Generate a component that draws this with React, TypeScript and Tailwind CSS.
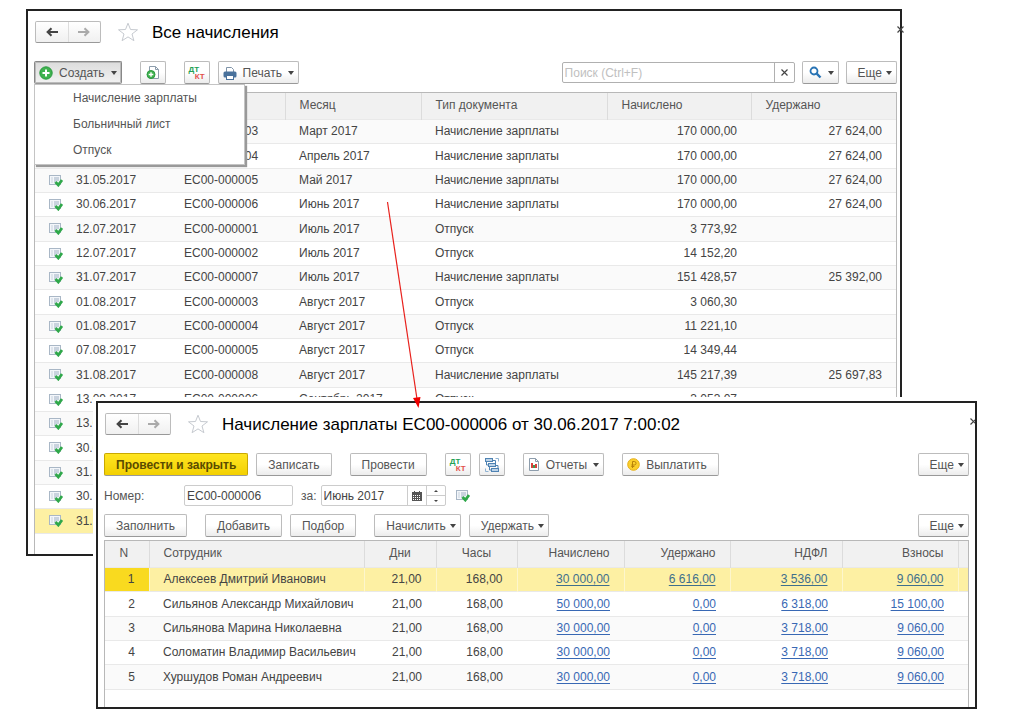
import { useState } from "react";
import type { ReactNode } from "react";
import clsx from "clsx";

interface Accrual {
  date: string;
  number?: string;
  month?: string;
  type?: string;
  accrued?: string;
  withheld?: string;
}

interface Employee {
  name: string;
  days: string;
  hours: string;
  sums: string[];
}

const SALARY = "Начисление зарплаты";
const VACATION = "Отпуск";

const accruals: Accrual[] = [
  { date: "31.03.2017", number: "ЕС00-000003", month: "Март 2017", type: SALARY, accrued: "170 000,00", withheld: "27 624,00" },
  { date: "30.04.2017", number: "ЕС00-000004", month: "Апрель 2017", type: SALARY, accrued: "170 000,00", withheld: "27 624,00" },
  { date: "31.05.2017", number: "ЕС00-000005", month: "Май 2017", type: SALARY, accrued: "170 000,00", withheld: "27 624,00" },
  { date: "30.06.2017", number: "ЕС00-000006", month: "Июнь 2017", type: SALARY, accrued: "170 000,00", withheld: "27 624,00" },
  { date: "12.07.2017", number: "ЕС00-000001", month: "Июль 2017", type: VACATION, accrued: "3 773,92" },
  { date: "12.07.2017", number: "ЕС00-000002", month: "Июль 2017", type: VACATION, accrued: "14 152,20" },
  { date: "31.07.2017", number: "ЕС00-000007", month: "Июль 2017", type: SALARY, accrued: "151 428,57", withheld: "25 392,00" },
  { date: "01.08.2017", number: "ЕС00-000003", month: "Август 2017", type: VACATION, accrued: "3 060,30" },
  { date: "01.08.2017", number: "ЕС00-000004", month: "Август 2017", type: VACATION, accrued: "11 221,10" },
  { date: "07.08.2017", number: "ЕС00-000005", month: "Август 2017", type: VACATION, accrued: "14 349,44" },
  { date: "31.08.2017", number: "ЕС00-000008", month: "Август 2017", type: SALARY, accrued: "145 217,39", withheld: "25 697,83" },
  { date: "13.09.2017", number: "ЕС00-000006", month: "Сентябрь 2017", type: VACATION, accrued: "3 053,07" },
  { date: "13.09.2017" },
  { date: "30.09.2017" },
  { date: "31.10.2017" },
  { date: "30.11.2017" },
  { date: "31.12.2017" },
];

const employees: Employee[] = [
  { name: "Алексеев Дмитрий Иванович", days: "21,00", hours: "168,00", sums: ["30 000,00", "6 616,00", "3 536,00", "9 060,00"] },
  { name: "Сильянов Александр Михайлович", days: "21,00", hours: "168,00", sums: ["50 000,00", "0,00", "6 318,00", "15 100,00"] },
  { name: "Сильянова Марина Николаевна", days: "21,00", hours: "168,00", sums: ["30 000,00", "0,00", "3 718,00", "9 060,00"] },
  { name: "Соломатин Владимир Васильевич", days: "21,00", hours: "168,00", sums: ["30 000,00", "0,00", "3 718,00", "9 060,00"] },
  { name: "Хуршудов Роман Андреевич", days: "21,00", hours: "168,00", sums: ["30 000,00", "0,00", "3 718,00", "9 060,00"] },
];

function PostedIcon() {
  return (
    <svg width="14" height="13" viewBox="0 0 14 13" className="shrink-0">
      <rect x="0.5" y="1.5" width="11" height="9" fill="#f3f6fa" stroke="#a9b7c6" />
      <path d="M2.5 4h1M5 4h5M2.5 6h1M5 6h5M2.5 8h1M5 8h2" stroke="#9fb0c3" />
      <path d="M6.5 8l2.8 3L13 6" fill="none" stroke="#2fa84a" strokeWidth="2.8" />
    </svg>
  );
}

function Caret() {
  return (
    <svg width="6" height="4" viewBox="0 0 6 4" className="mt-px shrink-0">
      <path d="M0 0h6L3 4z" fill="#444" />
    </svg>
  );
}

function PlusIcon() {
  return (
    <svg width="14" height="14" viewBox="0 0 14 14" className="shrink-0">
      <circle cx="7" cy="7" r="6.2" fill="#3fb24f" stroke="#2b9a40" />
      <path d="M7 3.5v7M3.5 7h7" stroke="#fff" strokeWidth="2" />
    </svg>
  );
}

function CopyIcon() {
  return (
    <svg width="14" height="15" viewBox="0 0 14 15" className="shrink-0">
      <path d="M3.5 1.5h6l3 3v9h-9z" fill="#fff" stroke="#8d9dac" />
      <path d="M9.5 1.5v3h3" fill="none" stroke="#8d9dac" />
      <circle cx="5" cy="9.5" r="4" fill="#3fb24f" stroke="#2b9a40" />
      <path d="M5 7.2v4.6M2.7 9.5h4.6" stroke="#fff" strokeWidth="1.4" />
    </svg>
  );
}

function PrinterIcon() {
  return (
    <svg width="14" height="14" viewBox="0 0 14 14" className="shrink-0">
      <path d="M3.5 6V1.5h5l2 2V6" fill="#fff" stroke="#7f93a8" />
      <rect x="0.5" y="5.5" width="13" height="6" rx="1.5" fill="#4a729c" />
      <rect x="3.5" y="9.5" width="7" height="4" fill="#fff" stroke="#4a729c" />
    </svg>
  );
}

function SearchIcon() {
  return (
    <svg width="13" height="13" viewBox="0 0 13 13" className="shrink-0">
      <circle cx="5" cy="5" r="3.5" fill="none" stroke="#2873b4" strokeWidth="1.8" />
      <path d="M7.7 7.7l3.8 3.8" stroke="#2873b4" strokeWidth="2.4" />
    </svg>
  );
}

function StructureIcon() {
  return (
    <svg width="14" height="14" viewBox="0 0 14 14" className="shrink-0" fill="none" stroke="#4f83b3">
      <path d="M10.5 0.5h3v3M3.5 13.5h-3v-3" stroke="#8fb2d2" />
      <rect x="0.5" y="0.5" width="7" height="3" fill="#bcd3e8" />
      <rect x="3.5" y="5.5" width="7" height="3" fill="#bcd3e8" />
      <rect x="6.5" y="10.5" width="7" height="3" fill="#bcd3e8" />
      <path d="M1.5 4v3h2M4.5 9v3h2M8 2.5h2.5v3M11 7.500h2v3" />
    </svg>
  );
}

function ReportIcon() {
  return (
    <svg width="12" height="13" viewBox="0 0 12 13" className="shrink-0">
      <path d="M1.5 0.5h6l3 3v9h-9z" fill="#fff" stroke="#8d9dac" />
      <path d="M7.500 0.500v3h3" fill="none" stroke="#8d9dac" />
      <path d="M3 5h2v5H3z" fill="#d8403a" />
      <path d="M5 7h2v3H5z" fill="#3f9a55" />
      <path d="M7 6h2v4H7z" fill="#d8403a" />
    </svg>
  );
}

function CoinIcon() {
  return (
    <svg width="13" height="13" viewBox="0 0 13 13" className="shrink-0">
      <circle cx="6.5" cy="6.5" r="5.8" fill="#fbcf2c" stroke="#e5ae15" />
      <path d="M5.500 10V3.500h1.800a1.700 1.700 0 010 3.500H4.300M4.300 8.500h3" fill="none" stroke="#b8830b" />
    </svg>
  );
}

function CalendarIcon() {
  return (
    <svg width="10" height="10" viewBox="0 0 10 10" className="shrink-0">
      <path d="M0 1h10v9H0z" fill="#555" />
      <path d="M2.500 0v2M7.500 0v2" stroke="#555" />
      <path d="M1 4.500h8M1 6.500h8M1 8.500h8" stroke="#fff" strokeDasharray="1 1" />
    </svg>
  );
}

function CrossIcon() {
  return (
    <svg width="7" height="7" viewBox="0 0 7 7" className="shrink-0">
      <path d="M0.500 0.500l6 6M6.500 0.500l-6 6" stroke="#444" strokeWidth="1.200" />
    </svg>
  );
}

function DebitCredit() {
  return (
    <span className="flex w-4 flex-col text-[8px] leading-[7px] font-bold">
      <span className="text-left text-[#23a055]">ДТ</span>
      <span className="text-right text-[#e2504c]">КТ</span>
    </span>
  );
}

interface ToolButtonProps {
  children?: ReactNode;
  icon?: ReactNode;
  menu?: boolean;
  label?: string;
  className?: string;
  onClick?: () => void;
}

function ToolButton({ children, icon, menu, label, className, onClick }: ToolButtonProps) {
  return (
    <button
      type="button"
      aria-label={label}
      onClick={onClick}
      className={clsx(
        "flex h-[23px] shrink-0 items-center justify-center rounded-[2px] border border-b-[#999] whitespace-nowrap",
        className ?? "border-[#bcbcbc] bg-linear-to-b from-white from-50% to-[#ececec] text-[#555]",
        icon ? "gap-1.5" : "gap-1",
        !children && !menu && "w-[26px]",
        children && !icon && "pl-[11px]",
        icon && children && "pl-1",
        icon && !children && menu && "pl-1.5",
        menu ? "pr-1" : children && "pr-[11px]"
      )}
    >
      {icon}
      {children}
      {menu && <Caret />}
    </button>
  );
}

function WindowHeader({ title }: { title: string }) {
  return (
    <div className="flex h-[22px] items-center">
      <div className="ml-px flex h-[22px] w-[66px] rounded-[2px] border border-[#bcbcbc] border-b-[#999] bg-linear-to-b from-white to-[#f0f0f0]">
        <button type="button" aria-label="Назад" className="flex flex-1 items-center justify-center border-r border-[#ddd]">
          <svg width="12" height="10" viewBox="0 0 12 10" fill="none" stroke="#444" strokeWidth="2">
            <path d="M12 5H2M5.500 1.200L1.600 5l3.900 3.800" />
          </svg>
        </button>
        <button type="button" aria-label="Вперед" className="flex flex-1 items-center justify-center">
          <svg width="12" height="10" viewBox="0 0 12 10" fill="none" stroke="#aaa" strokeWidth="2">
            <path d="M0 5h10M6.500 1.200L10.400 5l-3.900 3.800" />
          </svg>
        </button>
      </div>
      <svg width="22" height="20" viewBox="0 0 22 20" className="ml-4 shrink-0">
        <path
          d="M11 1.200l2.500 6.300 7 .3-5.500 4.200 1.900 6.700-5.900-3.800-5.900 3.800L7 12 1.500 7.800l7-.3z"
          fill="#fff"
          stroke="#c6cad0"
        />
      </svg>
      <h1 className="ml-[13px] pt-0.5 text-[17px] leading-[22px] whitespace-nowrap text-black">{title}</h1>
    </div>
  );
}

function AccrualsTable() {
  return (
    <table className="w-full table-fixed border-collapse">
      <colgroup>
        <col className="w-[27px]" />
        <col className="w-[108px]" />
        <col className="w-[115px]" />
        <col className="w-[136px]" />
        <col className="w-[186px]" />
        <col className="w-[144px]" />
        <col />
      </colgroup>
      <thead>
        <tr className="h-[26px] bg-[#f1f1f1] text-left text-[#555] *:pb-0.5 *:font-normal">
          <th />
          <th className="pl-3.5">Дата</th>
          <th className="border-r border-[#dcdcdc] pl-3.5">Номер</th>
          <th className="border-r border-[#dcdcdc] pl-3.5">Месяц</th>
          <th className="border-r border-[#dcdcdc] pl-3.5">Тип документа</th>
          <th className="border-r border-[#dcdcdc] pl-3.5">Начислено</th>
          <th className="pl-3.5">Удержано</th>
        </tr>
      </thead>
      <tbody>
        {accruals.map((row, index) => (
          <tr
            key={index}
            className={clsx(
              "h-6 border-y border-[#e9e9e9] nth-[3n+2]:h-[25px]",
              index === accruals.length - 1 ? "bg-[#fdf0a3]" : "odd:bg-[#fafafa]"
            )}
          >
            <td className="pl-3.5">
              <PostedIcon />
            </td>
            <td className="pl-3.5">{row.date}</td>
            <td className="pl-3.5">{row.number}</td>
            <td className="pl-3.5">{row.month}</td>
            <td className="pl-3.5">{row.type}</td>
            <td className="pr-3.5 text-right">{row.accrued}</td>
            <td className="pr-3.5 text-right">{row.withheld}</td>
          </tr>
        ))}
      </tbody>
    </table>
  );
}

function EmployeesTable() {
  return (
    <table className="w-full table-fixed border-collapse">
      <colgroup>
        <col className="w-11" />
        <col />
        <col className="w-[72px]" />
        <col className="w-[81px]" />
        <col className="w-[107px]" />
        <col className="w-[106px]" />
        <col className="w-28" />
        <col className="w-[116px]" />
        <col className="w-2.5" />
      </colgroup>
      <thead>
        <tr className="h-[26px] bg-[#f1f1f1] text-[#555] *:border-r *:border-[#dcdcdc] *:pb-0.5 *:font-normal *:last:border-r-0">
          <th className="pr-1.5">N</th>
          <th className="pl-3.5 text-left">Сотрудник</th>
          <th>Дни</th>
          <th>Часы</th>
          <th className="pr-3.5 text-right">Начислено</th>
          <th className="pr-3.5 text-right">Удержано</th>
          <th className="pr-3.5 text-right">НДФЛ</th>
          <th className="pr-3.5 text-right">Взносы</th>
          <th />
        </tr>
      </thead>
      <tbody>
        {employees.map((employee, index) => (
          <tr
            key={employee.name}
            className={clsx(
              "h-6 border-y border-[#e9e9e9] nth-[3n+2]:h-[25px]",
              index === 0 ? "bg-[#fdf0a3] *:border-r *:border-[#fdf6cc] *:last:border-r-0" : "odd:bg-[#fafafa]"
            )}
          >
            <td className={clsx("pr-3.5 text-right", index === 0 && "bg-[#f9da1f]")}>{index + 1}</td>
            <td className="pl-3.5 whitespace-nowrap">{employee.name}</td>
            <td className="pr-3.5 text-right">{employee.days}</td>
            <td className="pr-3.5 text-right">{employee.hours}</td>
            {employee.sums.map((sum, i) => (
              <td key={i} className="pr-3.5 text-right">
                <a href="#" className={clsx("underline underline-offset-2", index === 0 ? "text-[#3f6f8c]" : "text-[#3868b4]")}>
                  {sum}
                </a>
              </td>
            ))}
            <td />
          </tr>
        ))}
      </tbody>
    </table>
  );
}

function CreateMenu() {
  return (
    <ul className="absolute top-full left-0 z-10 w-[211px] border border-[#c4c4c4] bg-white pb-px shadow-[2px_2px_1px_#999]">
      {[SALARY, "Больничный лист", VACATION].map((item) => (
        <li key={item}>
          <button type="button" className="block h-[26px] w-full pl-[38px] text-left text-[#555]">
            {item}
          </button>
        </li>
      ))}
    </ul>
  );
}

function AccrualsWindow() {
  const [menuOpen, setMenuOpen] = useState(true);
  const [query, setQuery] = useState("");

  return (
    <section className="relative mr-[122px] ml-[26px] border-2 border-[#222] bg-white pt-2.5 pr-[3px] pl-1.5">
      <button type="button" aria-label="Закрыть" className="absolute top-[15px] -right-1">
        <CrossIcon />
      </button>
      <WindowHeader title="Все начисления" />
      <div className="mt-[18px] flex items-center">
        <div className="relative">
          <ToolButton
            icon={<PlusIcon />}
            menu
            onClick={() => setMenuOpen(!menuOpen)}
            className="border-[#888] bg-linear-to-b from-[#dcdcdc] to-[#f2f2f2] text-[#555] shadow-[inset_0_0_0_1px_#bbb]"
          >
            Создать
          </ToolButton>
          {menuOpen && <CreateMenu />}
        </div>
        <div className="ml-[18px] flex gap-[18px]">
          <ToolButton icon={<CopyIcon />} label="Скопировать" />
          <ToolButton icon={<DebitCredit />} label="Проводки" />
        </div>
        <div className="ml-2">
          <ToolButton icon={<PrinterIcon />} menu>
            Печать
          </ToolButton>
        </div>
        <div className="ml-auto flex h-[21px] w-[233px] rounded-[2px] border border-[#b0b0b0] bg-white">
          <input
            type="text"
            aria-label="Поиск"
            placeholder="Поиск (Ctrl+F)"
            value={query}
            onChange={(e) => setQuery(e.target.value)}
            className="min-w-0 flex-1 px-0.5 outline-none placeholder:text-[#c0c0c0]"
          />
          <button
            type="button"
            aria-label="Очистить"
            onClick={() => setQuery("")}
            className="flex w-5 items-center justify-center border-l border-[#b0b0b0]"
          >
            <CrossIcon />
          </button>
        </div>
        <div className="ml-[7px] flex gap-[7px]">
          <ToolButton icon={<SearchIcon />} menu label="Найти" />
          <ToolButton menu>Еще</ToolButton>
        </div>
      </div>
      <div className="mt-2 border border-b-0 border-[#b8b8b8] pb-5">
        <AccrualsTable />
      </div>
    </section>
  );
}

function DocumentWindow() {
  return (
    <section className="absolute top-[401px] right-[47px] left-24 border-2 border-[#222] bg-white px-1.5 pt-2.5 shadow-[-1px_-2px_0_2px_white]">
      <button type="button" aria-label="Закрыть" className="absolute top-[15px] right-0 w-[5px] overflow-hidden">
        <CrossIcon />
      </button>
      <WindowHeader title="Начисление зарплаты ЕС00-000006 от 30.06.2017 7:00:02" />
      <div className="mt-[18px] flex items-center gap-[18px]">
        <div className="flex gap-2">
          <ToolButton className="border-[#c9a800] bg-linear-to-b from-[#ffe51f] to-[#f3d000] font-bold text-[#5a4b00]">
            Провести и закрыть
          </ToolButton>
          <ToolButton>Записать</ToolButton>
        </div>
        <ToolButton>Провести</ToolButton>
        <div className="flex gap-2">
          <ToolButton icon={<DebitCredit />} label="Проводки" />
          <ToolButton icon={<StructureIcon />} label="Структура подчиненности" />
        </div>
        <ToolButton icon={<ReportIcon />} menu>
          Отчеты
        </ToolButton>
        <ToolButton icon={<CoinIcon />}>Выплатить</ToolButton>
        <div className="ml-auto">
          <ToolButton menu>Еще</ToolButton>
        </div>
      </div>
      <div className="mt-[9px] flex h-[21px] items-center">
        <label htmlFor="number" className="w-20 text-[#555]">
          Номер:
        </label>
        <input
          id="number"
          type="text"
          defaultValue="ЕС00-000006"
          className="h-[21px] w-[109px] rounded-[2px] border border-[#ccc] px-0.5"
        />
        <label htmlFor="period" className="mr-1 ml-2 text-[#555]">
          за:
        </label>
        <div className="flex h-[21px] w-[125px] rounded-[2px] border border-[#ccc]">
          <input id="period" type="text" defaultValue="Июнь 2017" className="min-w-0 flex-1 px-0.5 outline-none" />
          <button type="button" aria-label="Выбрать" className="flex w-5 items-center justify-center border-x border-[#ccc]">
            <CalendarIcon />
          </button>
          <div className="flex w-[18px] flex-col">
            <button type="button" aria-label="Больше" className="flex flex-1 items-center justify-center border-b border-[#ccc]">
              <svg width="4" height="2" viewBox="0 0 4 2">
                <path d="M0 2h4L2 0z" fill="#444" />
              </svg>
            </button>
            <button type="button" aria-label="Меньше" className="flex flex-1 items-center justify-center">
              <svg width="4" height="2" viewBox="0 0 4 2">
                <path d="M0 0h4L2 2z" fill="#444" />
              </svg>
            </button>
          </div>
        </div>
        <div className="ml-2.5">
          <PostedIcon />
        </div>
      </div>
      <div className="mt-2 flex items-center gap-[18px]">
        <ToolButton>Заполнить</ToolButton>
        <div className="flex gap-2">
          <ToolButton>Добавить</ToolButton>
          <ToolButton>Подбор</ToolButton>
        </div>
        <div className="flex gap-2">
          <ToolButton menu>Начислить</ToolButton>
          <ToolButton menu>Удержать</ToolButton>
        </div>
        <div className="ml-auto">
          <ToolButton menu>Еще</ToolButton>
        </div>
      </div>
      <div className="mt-[3px] border border-b-0 border-[#b8b8b8] pb-[17px]">
        <EmployeesTable />
      </div>
    </section>
  );
}

export default function App() {
  return (
    <main className="relative min-h-screen bg-white pt-[9px] font-['Liberation_Sans',Arial,sans-serif] text-[12px] leading-4 text-[#444]">
      <AccrualsWindow />
      <DocumentWindow />
      <svg width="44" height="210" viewBox="0 0 44 210" className="pointer-events-none absolute top-[200px] left-[380px]">
        <path d="M7.500 2L37 199" stroke="#e8201c" strokeWidth="1.200" />
        <path d="M38.500 208l-5.500-10 7.500-1z" fill="#f00000" />
      </svg>
    </main>
  );
}
